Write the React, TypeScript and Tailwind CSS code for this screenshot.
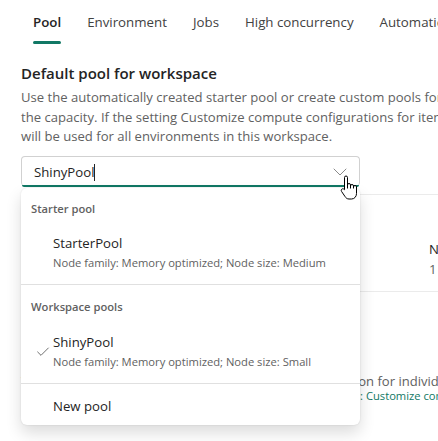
import { Check, ChevronDown } from 'lucide-react';

const tabs = ['Pool', 'Environment', 'Jobs', 'High concurrency', 'Automatic log'];

function HandCursor() {
  return (
    <svg width="18" height="25" viewBox="0 0 18 25" className="pointer-events-none">
      <path
        d="M4.5 2.5a1.5 1.5 0 0 1 3 0V10a1.5 1.5 0 0 1 3 0v1a1.5 1.5 0 0 1 3 0v1a1.5 1.5 0 0 1 3 0v6.5c0 3-2 5.5-5 5.5H9c-2 0-3-1-4-2.5L1.6 16.5c-.7-1-.4-2.2.6-2.6.8-.3 1.6 0 2.3.8V2.5Z"
        fill="#fff"
        stroke="#000"
        strokeWidth="1"
        strokeLinejoin="round"
      />
      <path d="M7.5 10v3.5M10.5 11v2.5M13.5 12v1.5" stroke="#000" strokeWidth="1" fill="none" />
    </svg>
  );
}

function PoolOption({ name, detail, selected }: { name: string; detail: string; selected?: boolean }) {
  return (
    <div className="flex items-center pl-[12px]">
      <div className="w-[20px] flex items-center justify-center">
        {selected && <Check size={16} strokeWidth={1} className="text-[#242424]" />}
      </div>
      <div className="flex flex-col">
        <span className="text-[13.2px] leading-[20px] text-[#242424]">{name}</span>
        <span className="text-[11.2px] leading-[20px] text-[#616161]">{detail}</span>
      </div>
    </div>
  );
}

export default function App() {
  return (
    <div
      className="w-[438px] h-[441px] overflow-hidden bg-white text-[#242424]"
      style={{ fontFamily: '"Open Sans", "Noto Sans", sans-serif' }}
    >
      {/* Tabs */}
      <div className="flex gap-[26px] pl-[33px] pt-[12px] whitespace-nowrap">
        {tabs.map((t, i) => (
          <div key={t} className="flex flex-col items-stretch">
            <span className={`text-[13.3px] leading-[20px] ${i === 0 ? 'font-semibold text-[#242424]' : 'text-[#424242]'}`}>
              {t}
            </span>
            <div className={`mt-[9px] h-[3px] rounded-full ${i === 0 ? 'bg-[#117865]' : 'bg-transparent'}`} />
          </div>
        ))}
      </div>

      <div className="relative pl-[21px] pt-[18px]">
        <h2 className="text-[15px] leading-[22px] font-semibold text-[#242424]">Default pool for workspace</h2>
        <p className="mt-[4px] text-[13.1px] leading-[19.5px] text-[#616161] whitespace-nowrap">
          Use the automatically created starter pool or create custom pools for workspaces and items in
          <br />
          the capacity. If the setting Customize compute configurations for items is turned on, this pool
          <br />
          will be used for all environments in this workspace.
        </p>

        {/* Combobox */}
        <div className="relative mt-[9px] w-[339px] h-[30px] rounded-[4px] border border-[#d1d1d1] border-b-0 bg-white flex items-center pt-[3px]">
          <span className="pl-[12px] text-[13.2px] text-[#242424]">ShinyPool</span>
          <span className="w-px h-[17px] bg-[#242424]" />
          <ChevronDown size={24} strokeWidth={1} className="absolute left-[306px] top-[3px] text-[#8a8a8a]" />
          <div className="absolute left-0 right-0 -bottom-px h-[2px] rounded-b-[4px] bg-[#117865]" />
          <div className="absolute left-[318px] top-[18px] z-20">
            <HandCursor />
          </div>
        </div>

        {/* Background content under the listbox */}
        <div className="mt-[8px] w-[540px] h-[98px] rounded-[4px] border border-[#ebebeb] flex pl-[16px] pt-[44px] whitespace-nowrap text-[13.2px] leading-[20px]">
          <div className="w-[190px] shrink-0">
            <div>Node family</div>
            <div className="text-[#616161]">Memory optimized</div>
          </div>
          <div className="w-[201px] shrink-0">
            <div>Node size</div>
            <div className="text-[#616161]">Small</div>
          </div>
          <div className="shrink-0">
            <div>Number of nodes</div>
            <div className="text-[#616161]">1</div>
          </div>
        </div>
        <div className="mt-[79px] whitespace-nowrap">
          <p className="text-[13.05px] leading-[20px] text-[#616161]">
            When turned on, users can choose compute configuration for individual items.
          </p>
          <p className="-mt-[3px] text-[11.2px] leading-[16px] text-[#117865]">
            Learn more about how workspace pool settings apply to all items: Customize compute configurations
          </p>
        </div>

        {/* Listbox */}
        <div className="absolute left-[21px] top-[144px] z-10 w-[339px] h-[237px] rounded-[6px] bg-white shadow-[0_8px_16px_rgba(0,0,0,0.14),0_0_2px_rgba(0,0,0,0.12)] whitespace-nowrap">
          <div className="pl-[10px] pt-[11px] text-[11.2px] leading-[20px] font-semibold text-[#616161]">Starter pool</div>
          <div className="mt-[14px]">
            <PoolOption name="StarterPool" detail="Node family: Memory optimized; Node size: Medium" />
          </div>
          <div className="mt-[11px] h-px bg-[#e0e0e0]" />
          <div className="mt-[12px] pl-[10px] text-[11.2px] leading-[20px] font-semibold text-[#616161]">Workspace pools</div>
          <div className="mt-[15px]">
            <PoolOption name="ShinyPool" detail="Node family: Memory optimized; Node size: Small" selected />
          </div>
          <div className="mt-[11px] h-px bg-[#e0e0e0]" />
          <div className="mt-[12px] pl-[32px] text-[13.2px] leading-[20px] text-[#242424]">New pool</div>
        </div>
      </div>
    </div>
  );
}
